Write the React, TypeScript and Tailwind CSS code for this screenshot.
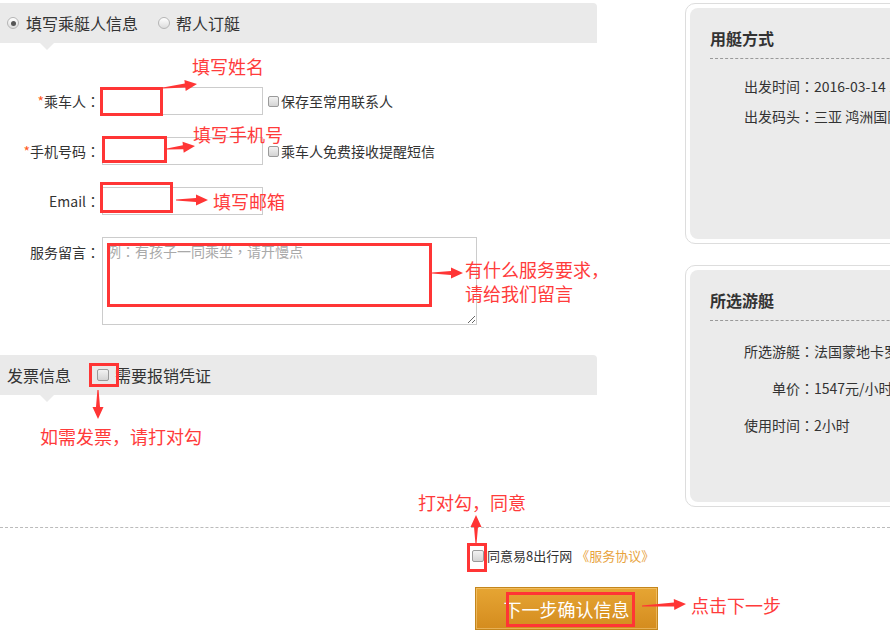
import React from "react";

const RED = "#ff3535";

function arrowPoints(x1: number, y1: number, x2: number, y2: number) {
    const dx = x2 - x1;
    const dy = y2 - y1;
    const len = Math.hypot(dx, dy);
    const ux = dx / len;
    const uy = dy / len;
    const nx = -uy;
    const ny = ux;
    const headLen = 12;
    const headW = 5.5;
    const tailW = 0.6;
    const neckW = 2;
    const bx = x2 - ux * headLen;
    const by = y2 - uy * headLen;
    const p = (x: number, y: number) => `${x.toFixed(1)},${y.toFixed(1)}`;
    return [
        p(x1 + nx * tailW, y1 + ny * tailW),
        p(bx + nx * neckW, by + ny * neckW),
        p(bx + nx * headW, by + ny * headW),
        p(x2, y2),
        p(bx - nx * headW, by - ny * headW),
        p(bx - nx * neckW, by - ny * neckW),
        p(x1 - nx * tailW, y1 - ny * tailW),
    ].join(" ");
}

const arrows: [number, number, number, number][] = [
    [163, 88, 197, 84],
    [167, 149, 195, 146],
    [176, 200, 208, 200],
    [432, 273, 463, 273],
    [98, 390, 98, 419],
    [476, 543, 476, 515],
    [642, 606, 686, 604],
];

// full-width colon, centred like the original page's font
function Colon() {
    return <span className="font-['Noto_Sans_CJK_TC',sans-serif]">：</span>;
}

function Radio({ checked }: { checked?: boolean }) {
    return (
        <span className="w-[12px] h-[12px] rounded-full border border-[#b5b5b5] bg-linear-to-b from-[#ffffff] to-[#dcdcdc] flex items-center justify-center shrink-0">
            {checked && <span className="w-[5px] h-[5px] rounded-full bg-[#555]" />}
        </span>
    );
}

function Checkbox({ size = 11 }: { size?: number }) {
    return (
        <span
            className={
                (size === 12 ? "w-[12px] h-[12px]" : "w-[11px] h-[11px]") +
                " block rounded-[2px] border border-[#9a9a9a] bg-linear-to-b from-[#f2f2f2] to-[#d4d4d4] shrink-0"
            }
        />
    );
}

function FormRow({ label, required, note }: { label: string; required?: boolean; note?: string }) {
    return (
        <div className="flex items-center h-[28px]">
            <span className="w-[100px] text-right text-[14px] leading-[20px] text-[#333]">
                {required && <span className="text-[#ff5a1e]">*</span>}
                {label}
                <Colon />
            </span>
            <input className="ml-[2px] w-[161px] h-[28px] border border-[#cccccc] bg-white outline-none" />
            {note && (
                <div className="flex items-center ml-[5px]">
                    <Checkbox />
                    <span className="ml-[2px] text-[14px] leading-[20px] text-[#333]">{note}</span>
                </div>
            )}
        </div>
    );
}

function InfoCard({
    title,
    rows,
    rowClass,
    height,
}: {
    title: string;
    rows: [string, string][];
    rowClass: string;
    height: string;
}) {
    return (
        <div className={"w-[260px] border border-[#dddddd] rounded-[10px] p-[4px] bg-white " + height}>
            <div className="h-full bg-[#ebebeb] rounded-[8px] pl-[20px] pt-[18px]">
                <div className="text-[16px] leading-[24px] font-bold text-[#333] pb-[8px] border-b border-dashed border-[#999]">
                    {title}
                </div>
                <div className="mt-[12px]">
                    {rows.map(([k, v], i) => (
                        <div key={i} className={"flex text-[14px] text-[#333] whitespace-nowrap " + rowClass}>
                            <span className="w-[104px] text-right shrink-0">
                                {k}
                                <Colon />
                            </span>
                            <span>{v}</span>
                        </div>
                    ))}
                </div>
            </div>
        </div>
    );
}

function Note({ className, children }: { className: string; children: React.ReactNode }) {
    return (
        <div className={"absolute text-[18px] leading-[24px] whitespace-nowrap text-[#ff3b3b] " + className}>
            {children}
        </div>
    );
}

function RedBox({ className }: { className: string }) {
    return <div className={"absolute border-[3px] border-[#ff3535] " + className} />;
}

export default function App() {
    return (
        <div className="relative w-[890px] h-[640px] overflow-hidden bg-white text-[#333] font-['Noto_Sans_CJK_SC',sans-serif]">
            <div className="flex pt-[3px]">
                {/* Left form */}
                <div className="w-[597px] shrink-0">
                    <div className="relative h-[40px] bg-[#eaeaea] rounded-tr-[4px] flex items-center pl-[7px]">
                        <Radio checked />
                        <span className="ml-[7px] text-[16px] leading-[22px]">填写乘艇人信息</span>
                        <span className="ml-[20px]">
                            <Radio />
                        </span>
                        <span className="ml-[6px] text-[16px] leading-[22px]">帮人订艇</span>
                        <span className="absolute left-[40px] top-full w-0 h-0 border-l-[7px] border-r-[7px] border-t-[7px] border-l-transparent border-r-transparent border-t-[#eaeaea]" />
                    </div>

                    <div className="mt-[44px] flex flex-col gap-[22px]">
                        <FormRow label="乘车人" required note="保存至常用联系人" />
                        <FormRow label="手机号码" required note="乘车人免费接收提醒短信" />
                        <FormRow label="Email" />
                        <div className="flex items-start">
                            <span className="w-[100px] text-right text-[14px] leading-[20px] mt-[5px]">
                                服务留言
                                <Colon />
                            </span>
                            <textarea
                                placeholder="例：有孩子一同乘坐，请开慢点"
                                className="ml-[2px] w-[375px] h-[88px] border border-[#cccccc] px-[4px] pt-[3px] text-[14px] leading-[20px] outline-none placeholder:text-[#a9a9a9] placeholder:font-['Noto_Sans_CJK_TC',sans-serif]"
                            />
                        </div>
                    </div>

                    <div className="relative mt-[30px] h-[40px] bg-[#eaeaea] rounded-tr-[4px] flex items-center pl-[7px]">
                        <span className="text-[16px] leading-[22px]">发票信息</span>
                        <span className="ml-[26px]">
                            <Checkbox size={12} />
                        </span>
                        <span className="ml-[6px] text-[16px] leading-[22px]">需要报销凭证</span>
                        <span className="absolute left-[40px] top-full w-0 h-0 border-l-[7px] border-r-[7px] border-t-[7px] border-l-transparent border-r-transparent border-t-[#eaeaea]" />
                    </div>
                </div>

                {/* Right summary */}
                <div className="ml-[88px] shrink-0 flex flex-col gap-[21px]">
                    <InfoCard
                        title="用艇方式"
                        height="h-[241px]"
                        rowClass="leading-[30px]"
                        rows={[
                            ["出发时间", "2016-03-14 10:00"],
                            ["出发码头", "三亚  鸿洲国际游艇码头"],
                        ]}
                    />
                    <InfoCard
                        title="所选游艇"
                        height="h-[242px]"
                        rowClass="leading-[37px]"
                        rows={[
                            ["所选游艇", "法国蒙地卡罗42尺"],
                            ["单价", "1547元/小时"],
                            ["使用时间", "2小时"],
                        ]}
                    />
                </div>
            </div>

            <div className="mt-[20px] border-t border-dashed border-[#bbbbbb]" />

            <div className="mt-[18px] h-[20px] flex items-center pl-[472px]">
                <Checkbox size={12} />
                <span className="ml-[3px] text-[13px] leading-[20px] text-[#333]">同意易8出行网</span>
                <span className="ml-[4px] text-[13px] leading-[20px] text-[#e8a33d]">《服务协议》</span>
            </div>

            <div className="mt-[21px] ml-[475px] w-[183px] h-[43px] border border-[#c4861c] bg-linear-to-b from-[#e6a533] to-[#d48c1e] shadow-[inset_0_0_0_1px_rgba(255,220,150,0.45)] flex items-center justify-center">
                <span className="text-[18px] leading-[24px] text-white">下一步确认信息</span>
            </div>

            {/* Annotations */}
            <RedBox className="left-[100px] top-[87px] w-[63px] h-[29px]" />
            <RedBox className="left-[102px] top-[136px] w-[65px] h-[27px]" />
            <RedBox className="left-[100px] top-[182px] w-[73px] h-[31px]" />
            <RedBox className="left-[107px] top-[243px] w-[325px] h-[64px]" />
            <RedBox className="left-[89px] top-[363px] w-[30px] h-[24px]" />
            <RedBox className="left-[467px] top-[543px] w-[20px] h-[29px]" />
            <RedBox className="left-[506px] top-[592px] w-[129px] h-[35px]" />

            <svg className="absolute left-0 top-0 pointer-events-none" width="890" height="640">
                {arrows.map(([a, b, c, d], i) => (
                    <polygon key={i} points={arrowPoints(a, b, c, d)} fill={RED} />
                ))}
            </svg>

            <Note className="left-[192px] top-[54px]">填写姓名</Note>
            <Note className="left-[193px] top-[122px]">填写手机号</Note>
            <Note className="left-[213px] top-[189px]">填写邮箱</Note>
            <Note className="left-[465px] top-[257px] leading-[23px]">
                有什么服务要求，
                <br />
                请给我们留言
            </Note>
            <Note className="left-[40px] top-[424px]">如需发票，请打对勾</Note>
            <Note className="left-[418px] top-[490px]">打对勾，同意</Note>
            <Note className="left-[691px] top-[593px]">点击下一步</Note>
        </div>
    );
}
